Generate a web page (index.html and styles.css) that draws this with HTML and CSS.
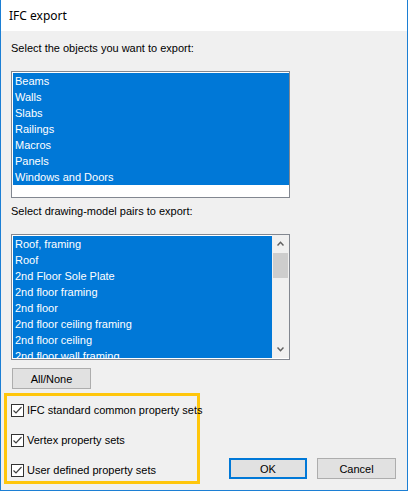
FILE: index.html
```html
<!DOCTYPE html>
<html lang="en">
<head>
  <meta charset="UTF-8">
  <title>IFC export</title>
  <link rel="stylesheet" href="styles.css">
</head>
<body>
  <div class="window">
    <div class="titlebar">IFC export</div>

    <div class="client">
      <div class="caption">Select the objects you want to export:</div>
      <div class="listbox objects">
        <ul class="items">
          <li>Beams</li>
          <li>Walls</li>
          <li>Slabs</li>
          <li>Railings</li>
          <li>Macros</li>
          <li>Panels</li>
          <li>Windows and Doors</li>
        </ul>
      </div>

      <div class="caption second">Select drawing-model pairs to export:</div>
      <div class="listbox pairs">
        <ul class="items">
          <li>Roof, framing</li>
          <li>Roof</li>
          <li>2nd Floor Sole Plate</li>
          <li>2nd floor framing</li>
          <li>2nd floor</li>
          <li>2nd floor ceiling framing</li>
          <li>2nd floor ceiling</li>
          <li>2nd floor wall framing</li>
        </ul>
        <div class="vscroll">
          <div class="sb-btn">
            <svg width="7" height="5" viewBox="0 0 7 5"><polyline points="0.5,4.5 3.5,1.3 6.5,4.5" fill="none" stroke="#606060" stroke-width="1.5"/></svg>
          </div>
          <div class="sb-thumb"></div>
          <div class="sb-track"></div>
          <div class="sb-btn">
            <svg width="7" height="5" viewBox="0 0 7 5"><polyline points="0.5,0.5 3.5,3.7 6.5,0.5" fill="none" stroke="#606060" stroke-width="1.5"/></svg>
          </div>
        </div>
      </div>

      <button class="btn toggle">All/None</button>

      <div class="footer">
        <div class="options">
          <label class="check">
            <span class="box"><svg width="11" height="11" viewBox="0 0 11 11"><polyline points="1.5,5.5 4,8 9.5,2" fill="none" stroke="#404040" stroke-width="1.2"/></svg></span>
            IFC standard common property sets
          </label>
          <label class="check">
            <span class="box"><svg width="11" height="11" viewBox="0 0 11 11"><polyline points="1.5,5.5 4,8 9.5,2" fill="none" stroke="#404040" stroke-width="1.2"/></svg></span>
            Vertex property sets
          </label>
          <label class="check">
            <span class="box"><svg width="11" height="11" viewBox="0 0 11 11"><polyline points="1.5,5.5 4,8 9.5,2" fill="none" stroke="#404040" stroke-width="1.2"/></svg></span>
            User defined property sets
          </label>
        </div>

        <div class="actions">
          <button class="btn ok">OK</button>
          <button class="btn cancel">Cancel</button>
        </div>
      </div>
    </div>
  </div>
</body>
</html>
```

FILE: styles.css
```css
body {
  margin: 0;
  font-family: "Liberation Sans", Arial, sans-serif;
  font-size: 11px;
  color: #000;
}

.window {
  width: 408px;
  height: 491px;
  box-sizing: border-box;
  border: 1px solid #1c7fd4;
  border-top: none;
  background: #f0f0f0;
  display: flex;
  flex-direction: column;
}

.titlebar {
  height: 31px;
  line-height: 31px;
  padding-left: 8px;
  background: #fff;
  font-family: "Noto Sans", sans-serif;
  font-size: 12px;
}

.client {
  padding: 11px 11px 0 10px;
  display: flex;
  flex-direction: column;
  align-items: flex-start;
}

.caption {
  line-height: 13px;
  margin-bottom: 16px;
}

.caption.second {
  margin-top: 7px;
}

.listbox {
  width: 279px;
  box-sizing: border-box;
  border: 1px solid #828790;
  background: #fff;
  padding: 1px 0 0 1px;
  overflow: hidden;
}

.listbox.objects {
  height: 127px;
}

.listbox.pairs {
  height: 126px;
  display: flex;
  padding-bottom: 1px;
}

.items {
  list-style: none;
  margin: 0;
  padding: 0;
  flex: 1;
  overflow: hidden;
  background: #0078d7;
}

.listbox.objects .items {
  display: inline-block;
  width: 100%;
}

.items li {
  height: 16px;
  line-height: 16px;
  padding-left: 2px;
  color: #fff;
  white-space: nowrap;
}

.vscroll {
  width: 17px;
  background: #f0f0f0;
  display: flex;
  flex-direction: column;
  margin-top: -1px;
}

.sb-btn {
  height: 17px;
  display: flex;
  align-items: center;
  justify-content: center;
}

.sb-thumb {
  height: 25px;
  margin: 1px 1px 0;
  background: #cdcdcd;
}

.sb-track {
  flex: 1;
}

.btn {
  font-family: "Liberation Sans", Arial, sans-serif;
  font-size: 11px;
  color: #000;
  background: #e1e1e1;
  border: 1px solid #adadad;
  box-sizing: border-box;
  height: 21px;
  padding: 0;
  margin: 0;
}

.toggle {
  width: 79px;
  margin: 8px 0 0 1px;
}

.footer {
  align-self: stretch;
  margin-top: 4px;
  display: flex;
  justify-content: space-between;
  align-items: flex-end;
}

.options {
  width: 196px;
  height: 91px;
  box-sizing: border-box;
  margin-left: -7px;
  border: 3px solid #ffc60b;
  padding: 8px 0 0 4px;
  display: flex;
  flex-direction: column;
  gap: 17px;
}

.check {
  display: flex;
  align-items: center;
  gap: 3px;
  height: 13px;
  line-height: 13px;
  white-space: nowrap;
}

.box {
  width: 13px;
  height: 13px;
  box-sizing: border-box;
  border: 1px solid #333;
  background: #fff;
  display: flex;
  align-items: center;
  justify-content: center;
}

.actions {
  display: flex;
  gap: 10px;
  margin-bottom: 5px;
}

.ok {
  width: 78px;
  border: 2px solid #0078d7;
}

.cancel {
  width: 79px;
}
```
